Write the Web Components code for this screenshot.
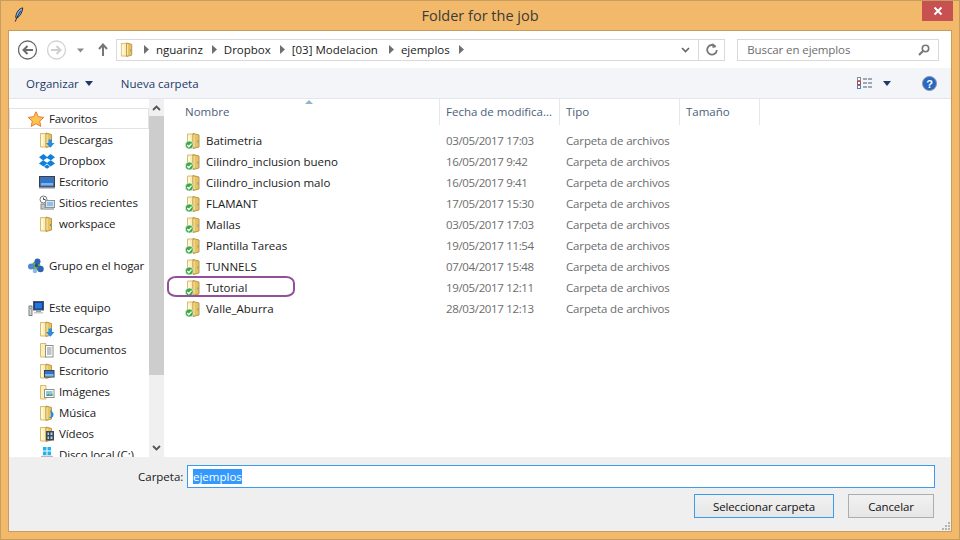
<!DOCTYPE html>
<html lang="es">
<head>
<meta charset="utf-8">
<title>Folder for the job</title>
<style>
  html, body { margin: 0; padding: 0; background: #f3b96b; }
  body { width: 960px; height: 540px; overflow: hidden; font: 11.5px "Open Sans", "Noto Sans", sans-serif; color: #1a1a1a; }
</style>
</head>
<body>
<folder-dialog></folder-dialog>

<script>
const FOLDER = `<path d="M1.500 1.500h5.500v13.500h-5.500z" fill="#fdeeb4" stroke="#d9bc73"/><path d="M7 1l5.500 1.500v11.500l-5.500 1.500z" fill="#e8c25e" stroke="#b8974e"/><path d="M8 2.500v11.500" stroke="#fbe9a8"/><path d="M3 3v10.500" stroke="#fff8dc" stroke-width="2"/>`;

const ICONS = {
  folder: `${FOLDER}<rect x="11" y="8" width="1" height="2" fill="#4a9ad8"/>`,
  down: `${FOLDER}<path d="M9.500 7.500h3.500v3.500h2.500l-4.200 4.700-4.300-4.700h2.500z" fill="#2a8be0"/>`,
  dropbox: `<path d="M4.500 1L0 4.300l4 3-4 3.100 4.500 3.100 3.500-2.900 3.500 2.900 4.500-3.100-4-3.100 4-3L11.500 1 8 4zM4.300 7.300L8 5l3.700 2.300L8 9.700z" fill="#0d7fdc" fill-rule="evenodd"/><path d="M5 13.800l3-2.300 3 2.300-3 2z" fill="#0d7fdc"/>`,
  desktop: `<rect x="0.500" y="2.500" width="15" height="10.500" fill="#4a6fa8" stroke="#3a3f4c"/><rect x="2" y="4" width="12" height="7.500" fill="#2f75c8"/><rect x="2" y="9" width="12" height="2.500" fill="#7fb4e8"/><rect x="0" y="13" width="16" height="1.500" fill="#8a8f99"/>`,
  recent: `<circle cx="4.500" cy="4.500" r="3.500" fill="#fff" stroke="#777"/><path d="M4.500 2.500v2h2" fill="none" stroke="#444"/><rect x="6.500" y="5.500" width="9" height="7" fill="#d8e4ee" stroke="#8a949e"/><rect x="8" y="7" width="6" height="4" fill="#8fc0e4"/><rect x="2" y="9" width="4" height="5" fill="#c4c8cc" stroke="#888"/><rect x="4" y="13" width="11" height="2" fill="#b9bdc2"/>`,
  homegroup: `<circle cx="8" cy="8" r="4.500" fill="#6fb04a"/><circle cx="9.500" cy="3.500" r="3" fill="#2d62b5"/><circle cx="3" cy="8.500" r="3" fill="#4f86d6"/><circle cx="12.500" cy="11" r="3.200" fill="#2d62b5"/><circle cx="7" cy="13" r="2.300" fill="#8fb8ec"/><circle cx="8.500" cy="7.500" r="1.800" fill="#1d4f9e"/>`,
  computer: `<rect x="5.500" y="1.500" width="10" height="8.500" fill="#123f9c" stroke="#555"/><rect x="7" y="3" width="7" height="5.500" fill="#1f78dc"/><rect x="8" y="10" width="5" height="2" fill="#9aa0a8"/><rect x="1" y="6" width="3" height="9.500" fill="#d7dadd" stroke="#5d6268" stroke-width="0.800"/><rect x="2" y="8" width="1" height="1" fill="#3fbf4f"/><rect x="6" y="12" width="9" height="1.500" fill="#c6cace"/>`,
  docs: `<path d="M1.500 1.500h5.500v13.500h-5.500z" fill="#fdeeb4" stroke="#d9bc73"/><rect x="6.500" y="3.500" width="7.500" height="11.500" fill="#fff" stroke="#8a8f96"/><path d="M8 6h4.500M8 8h4.500M8 10h4.500M8 12h4.500" stroke="#7c8894"/>`,
  deskfolder: `${FOLDER}<rect x="5.500" y="7.500" width="9.500" height="6.500" fill="#2f75c8" stroke="#3a3f4c"/><rect x="6" y="11" width="8.500" height="2.500" fill="#7fb4e8"/>`,
  pics: `<path d="M1.500 1.500h5.500v13.500h-5.500z" fill="#fdeeb4" stroke="#d9bc73"/><rect x="5.500" y="5.500" width="9.500" height="8" fill="#fff" stroke="#8a8f96"/><rect x="7" y="7" width="6.500" height="5" fill="#8cc6dc"/><path d="M7 12l2.500-2.500 1.500 1.500 2.500-1.500v2.500z" fill="#5c9a70"/>`,
  music: `${FOLDER}<path d="M11 4.500c1 2 3.500 2 3.500 5s-2.500 4-5 3.500c1.500-.5 2.500-1.200 2.500-3z" fill="#2a8be0"/>`,
  video: `${FOLDER}<rect x="7" y="5" width="8" height="9.500" fill="#3e4650"/><path d="M8.500 6.500h1.500v2.500h-1.500zM11.500 6.500h2v2.500h-2zM8.500 10.500h1.500v2.500h-1.500zM11.500 10.500h2v2.500h-2z" fill="#a4d0ec"/>`,
  disk: `<path d="M4 0h3.500v3.500h-3.500zM8.500 0h3.500v3.500h-3.500zM4 4.500h3.500v3.500h-3.500zM8.500 4.500h3.500v3.500h-3.500z" fill="#1fb4f0"/><path d="M1 11l2-2h10l2 2v4h-14z" fill="#c9ced3" stroke="#8d9297" stroke-width="0.600"/>`,
  star: `<path d="M8 0.800l2.300 4.900 5.400.7-4 3.700 1.100 5.300L8 12.700l-4.800 2.700 1.100-5.300-4-3.700 5.400-.7z" fill="#fbc44a" stroke="#e8793a"/>`,
  sync: `<path d="M2.500 1h5.500v13.500h-5.500z" fill="#fdeeb4" stroke="#d9bc73"/><path d="M8 .5l6 1.500v12l-6 1.500z" fill="#e8c25e" stroke="#b8974e"/><path d="M9 2v12" stroke="#fbe9a8"/><path d="M4 2.500v8" stroke="#fff8dc" stroke-width="2"/><rect x="12.500" y="7.500" width="1" height="2" fill="#4a9ad8"/><circle cx="4.300" cy="12" r="4" fill="#3aa845" stroke="#fff" stroke-width="0.600"/><path d="M2.300 12l1.600 1.700 2.600-3.100" fill="none" stroke="#fff" stroke-width="1.400"/>`
};

function icon(name, size = 16) {
  return `<svg width="${size}" height="${size}" viewBox="0 0 16 16" style="display:block;flex:none">${ICONS[name]}</svg>`;
}

class TitleBar extends HTMLElement {
  connectedCallback() {
    this.attachShadow({ mode: "open" }).innerHTML = /* html */`
      <style>
        :host { display: flex; align-items: flex-start; height: 30px; position: relative; box-sizing: border-box; border-top: 1px solid #c69c5f; }
        .feather { margin: 6px 0 0 13px; }
        .title { position: absolute; left: 0; right: 0; top: 5px; text-align: center; font-size: 14.500px; line-height: 20px; color: #3a3a3a; }
        .close { margin-left: auto; margin-right: 6px; width: 31px; height: 20px; background: #c75050; display: flex; align-items: center; justify-content: center; position: relative; }
      </style>
      <svg class="feather" width="10" height="16" viewBox="0 0 12 18">
        <path d="M10.500 0.500C6 1 2.500 6 2 12l1 1c4-2 7-7 7.500-12.500z" fill="#7db4ee" stroke="#10161f"/>
        <path d="M8 4L3 13 1.500 17" fill="none" stroke="#10161f"/>
      </svg>
      <div class="title">Folder for the job</div>
      <div class="close">
        <svg width="10" height="10" viewBox="0 0 10 10"><path d="M1.500 1.500l7 7M8.500 1.500l-7 7" stroke="#fff" stroke-width="2"/></svg>
      </div>
    `;
  }
}

class NavBar extends HTMLElement {
  connectedCallback() {
    const crumbs = ["nguarinz", "Dropbox", "[03] Modelacion", "ejemplos"];
    const arrow = `<svg class="sep" width="5" height="9" viewBox="0 0 5 9"><path d="M0 0l5 4.500L0 9z" fill="#6f6f6f"/></svg>`;
    this.attachShadow({ mode: "open" }).innerHTML = /* html */`
      <style>
        :host { display: flex; align-items: center; height: 37px; background: #fff; padding: 0 12px 0 9px; box-sizing: border-box; }
        .round { flex: none; }
        .addr { margin-left: 8px; width: 610px; height: 22px; box-sizing: border-box; border: 1px solid #d9d9d9; display: flex; align-items: center; padding-left: 3px; }
        .addr > svg:first-child { margin-right: 9px; }
        .crumb { color: #1a1a1a; margin: 0 9px 0 7px; white-space: nowrap; }
        .crumb:nth-of-type(3) { margin-right: 11px; }
        .sep { flex: none; }
        .end { margin-left: auto; height: 100%; display: flex; align-items: center; }
        .refresh { width: 25px; height: 100%; border-left: 1px solid #d9d9d9; display: flex; align-items: center; justify-content: center; margin-left: 8px; }
        .search { margin-left: 12px; width: 202px; height: 22px; box-sizing: border-box; border: 1px solid #d9d9d9; display: flex; align-items: center; justify-content: space-between; padding: 0 8px 0 9px; color: #6d6d6d; letter-spacing: -.1px; }
      </style>
      <svg class="round" width="76" height="22" viewBox="0 0 76 22">
        <circle cx="9.500" cy="11" r="9" fill="#fff" stroke="#6b6b6b" stroke-width="1.300"/>
        <path d="M15 11H5.500M9.500 7l-4 4 4 4" fill="none" stroke="#6b6b6b" stroke-width="2"/>
        <circle cx="38.500" cy="11" r="9" fill="#fff" stroke="#d2d2d2" stroke-width="1.300"/>
        <path d="M33 11h9.500M38.500 7l4 4-4 4" fill="none" stroke="#cfcfcf" stroke-width="2"/>
        <path d="M59 9.500h7l-3.500 4z" fill="#8a8a8a"/>
      </svg>
      <svg class="round" width="10" height="13" viewBox="0 0 10 13" style="margin-left:4px"><path d="M5 13V2M1 6l4-4.500L9 6" fill="none" stroke="#777" stroke-width="2"/></svg>
      <div class="addr">
        ${icon("folder", 15)}
        ${crumbs.map(c => `${arrow}<span class="crumb">${c}</span>`).join("")}${arrow}
        <div class="end">
          <svg width="9" height="6" viewBox="0 0 9 6"><path d="M1 1l3.500 3.500L8 1" fill="none" stroke="#666" stroke-width="1.600"/></svg>
          <div class="refresh">
            <svg width="12" height="13" viewBox="0 0 12 13"><path d="M9.500 3.500A4.800 4.800 0 1 0 10.800 7" fill="none" stroke="#777" stroke-width="1.800"/><path d="M6.500 0v5l4-1z" fill="#777"/></svg>
          </div>
        </div>
      </div>
      <div class="search">
        <span>Buscar en ejemplos</span>
        <svg width="12" height="12" viewBox="0 0 12 12"><circle cx="7.500" cy="4.500" r="3.200" fill="none" stroke="#777" stroke-width="1.600"/><path d="M5 7L1 11" stroke="#777" stroke-width="2.200"/></svg>
      </div>
    `;
  }
}

class ToolBar extends HTMLElement {
  connectedCallback() {
    this.attachShadow({ mode: "open" }).innerHTML = /* html */`
      <style>
        :host { display: flex; align-items: center; height: 31px; box-sizing: border-box; background: #f3f5f8; border-bottom: 1px solid #e3e6ea; padding: 0 14px 0 17px; color: #1e3a66; }
        .caret { margin: 1px 0 0 6px; }
        .new { margin-left: 28px; }
        .right { margin-left: auto; display: flex; align-items: center; }
        .help { margin-left: 31px; }
      </style>
      <span>Organizar</span>
      <svg class="caret" width="8" height="5" viewBox="0 0 8 5"><path d="M0 0h8L4 5z" fill="#1e3a66"/></svg>
      <span class="new">Nueva carpeta</span>
      <div class="right">
        <svg width="16" height="13" viewBox="0 0 16 13">
          <rect x="0.500" y="0.500" width="3" height="3" fill="#fff" stroke="#7f8ca0"/><rect x="0.500" y="4.500" width="3" height="3" fill="#fff" stroke="#c04a4a"/><rect x="0.500" y="8.500" width="3" height="3" fill="#fff" stroke="#4f7fc0"/>
          <path d="M6 2h4M11 2h4M6 6h4M11 6h4M6 10h4M11 10h4" stroke="#4a5a75"/>
        </svg>
        <svg class="caret" style="margin-left:10px" width="8" height="5" viewBox="0 0 8 5"><path d="M0 0h8L4 5z" fill="#1e3a66"/></svg>
        <svg class="help" width="15" height="15" viewBox="0 0 15 15">
          <circle cx="7.500" cy="7.500" r="7" fill="#2a66c4" stroke="#8a94a4"/>
          <text x="7.500" y="11.500" text-anchor="middle" font-size="11" font-weight="700" fill="#fff" font-family="Liberation Sans, sans-serif">?</text>
        </svg>
      </div>
    `;
  }
}

class SideRow extends HTMLElement {
  connectedCallback() {
    const indent = this.hasAttribute("child") ? 30 : 19;
    this.attachShadow({ mode: "open" }).innerHTML = /* html */`
      <style>
        :host { display: flex; align-items: center; gap: 4px; height: 21px; padding-left: ${indent}px; box-sizing: border-box; white-space: nowrap; position: relative; flex: none; letter-spacing: -.12px; }
        :host([selected]) { outline: 1px solid #e3e3e3; outline-offset: -1px; gap: 5px; }
        :host([gap]) { margin-top: 21px; gap: 5px; }
      </style>
      ${icon(this.getAttribute("icon"))}<slot></slot>
    `;
  }
}

class SideBar extends HTMLElement {
  connectedCallback() {
    this.attachShadow({ mode: "open" }).innerHTML = /* html */`
      <style>
        :host { display: flex; flex: none; width: 156px; overflow: hidden; background: #fff; }
        .items { width: 140px; padding: 9px 0 0 0; flex: none; display: flex; flex-direction: column; box-sizing: border-box; overflow: hidden; }
        .bar { width: 15px; flex: none; background: #f0f0f0; display: flex; flex-direction: column; align-items: center; }
        .up, .dn { height: 17px; flex: none; display: flex; align-items: center; justify-content: center; }
        .thumb { width: 100%; height: 259px; background: #cdcdcd; flex: none; }
        .dn { margin-top: auto; margin-bottom: 1px; }
      </style>
      <div class="items"><slot></slot></div>
      <div class="bar">
        <div class="up"><svg width="9" height="6" viewBox="0 0 9 6"><path d="M1 5l3.500-3.500L8 5" fill="none" stroke="#555" stroke-width="1.800"/></svg></div>
        <div class="thumb"></div>
        <div class="dn"><svg width="9" height="6" viewBox="0 0 9 6"><path d="M1 1l3.500 3.500L8 1" fill="none" stroke="#555" stroke-width="1.800"/></svg></div>
      </div>
    `;
  }
}

class FileList extends HTMLElement {
  connectedCallback() {
    const rows = [
      ["Batimetria", "03/05/2017 17:03"],
      ["Cilindro_inclusion bueno", "16/05/2017 9:42"],
      ["Cilindro_inclusion malo", "16/05/2017 9:41"],
      ["FLAMANT", "17/05/2017 15:30"],
      ["Mallas", "03/05/2017 17:03"],
      ["Plantilla Tareas", "19/05/2017 11:54"],
      ["TUNNELS", "07/04/2017 15:48"],
      ["Tutorial", "19/05/2017 12:11"],
      ["Valle_Aburra", "28/03/2017 12:13"],
    ];
    this.attachShadow({ mode: "open" }).innerHTML = /* html */`
      <style>
        :host { display: block; flex: 1; background: #fff; position: relative; min-width: 0; }
        .head, .row { display: grid; grid-template-columns: 275px 120px 120px 80px; }
        .head { height: 26px; color: #4c607a; position: relative; }
        .head div { padding: 4px 0 0 6px; border-right: 1px solid #e5e8ec; height: 22px; line-height: 18px; box-sizing: content-box; }
        .head div:first-child { padding-left: 20px; }
        .sort { position: absolute; left: 140px; top: 1px; }
        .rows { margin-top: 5px; }
        .row { height: 21px; align-items: center; color: #6d6d6d; }
        .name { display: flex; align-items: center; gap: 5px; padding-left: 20px; color: #1a1a1a; white-space: nowrap; }
        .cell { padding-left: 6px; white-space: nowrap; letter-spacing: -.15px; }
        .date { letter-spacing: -.35px; }
        .mark { position: absolute; left: 2px; top: 177px; width: 128px; height: 21px; box-sizing: border-box; border: 2.500px solid #954f98; border-radius: 9px / 7px; }
      </style>
      <div class="head">
        <div>Nombre</div><div>Fecha de modifica...</div><div>Tipo</div><div>Tamaño</div>
        <svg class="sort" width="8" height="4" viewBox="0 0 8 4"><path d="M0 4l4-4 4 4z" fill="#8fb4d4"/></svg>
      </div>
      <div class="rows">
        ${rows.map(r => `<div class="row"><div class="name">${icon("sync")}${r[0]}</div><div class="cell date">${r[1]}</div><div class="cell">Carpeta de archivos</div><div></div></div>`).join("")}
      </div>
      <div class="mark"></div>
    `;
  }
}

class DialogFooter extends HTMLElement {
  connectedCallback() {
    this.attachShadow({ mode: "open" }).innerHTML = /* html */`
      <style>
        :host { display: flex; flex-direction: column; flex: none; height: 74px; box-sizing: border-box; background: #efefef; padding: 8px 16px 0 129px; position: relative; }
        .line { display: flex; align-items: center; height: 23px; }
        label { width: 49px; flex: none; }
        .input { flex: 1; height: 23px; box-sizing: border-box; border: 1px solid #3c9bf0; background: #fff; display: flex; align-items: center; padding-left: 5px; }
        .sel { background: #3399ff; color: #fff; line-height: 15px; }
        .btns { display: flex; justify-content: flex-end; gap: 14px; margin-top: 6px; padding-right: 1px; }
        button { font: inherit; color: #111; height: 24px; padding: 0; box-sizing: border-box; border: 1px solid #adadad; background: linear-gradient(#f1f1f1, #e6e6e6); border-radius: 0; letter-spacing: -.15px; }
        .ok { width: 140px; border-color: #3c9bf0; }
        .no { width: 86px; }
        .grip { position: absolute; right: 1px; bottom: 1px; }
      </style>
      <div class="line"><label>Carpeta:</label><div class="input"><span class="sel">ejemplos</span></div></div>
      <div class="btns"><button class="ok">Seleccionar carpeta</button><button class="no">Cancelar</button></div>
      <svg class="grip" width="8" height="8" viewBox="0 0 8 8" fill="#b4b4b4"><rect x="6" y="0" width="2" height="2"/><rect x="3" y="3" width="2" height="2"/><rect x="6" y="3" width="2" height="2"/><rect x="0" y="6" width="2" height="2"/><rect x="3" y="6" width="2" height="2"/><rect x="6" y="6" width="2" height="2"/></svg>
    `;
  }
}

class FolderDialog extends HTMLElement {
  connectedCallback() {
    const side = [
      ["star", "Favoritos", "selected"],
      ["down", "Descargas", "child"], ["dropbox", "Dropbox", "child"], ["desktop", "Escritorio", "child"],
      ["recent", "Sitios recientes", "child"], ["folder", "workspace", "child"],
      ["homegroup", "Grupo en el hogar", "gap"],
      ["computer", "Este equipo", "gap"],
      ["down", "Descargas", "child"], ["docs", "Documentos", "child"], ["deskfolder", "Escritorio", "child"],
      ["pics", "Imágenes", "child"], ["music", "Música", "child"], ["video", "Vídeos", "child"], ["disk", "Disco local (C:)", "child"],
    ];
    this.attachShadow({ mode: "open" }).innerHTML = /* html */`
      <style>
        :host { display: flex; flex-direction: column; width: 960px; height: 540px; box-sizing: border-box; background: #f3b96b; border: 0 solid #c69c5f; border-width: 0 1px 1px 1px; }
        .client { flex: 1; margin: 0 7px 7px 7px; border: 1px solid #c69c5f; display: flex; flex-direction: column; min-height: 0; background: #fff; }
        .main { flex: 1; display: flex; min-height: 0; }
      </style>
      <title-bar></title-bar>
      <div class="client">
        <nav-bar></nav-bar>
        <tool-bar></tool-bar>
        <div class="main">
          <side-bar>
            ${side.map(s => `<side-row icon="${s[0]}" ${s[2]}>${s[1]}</side-row>`).join("")}
          </side-bar>
          <file-list></file-list>
        </div>
        <dialog-footer></dialog-footer>
      </div>
    `;
  }
}

customElements.define("side-row", SideRow);
customElements.define("side-bar", SideBar);
customElements.define("title-bar", TitleBar);
customElements.define("nav-bar", NavBar);
customElements.define("tool-bar", ToolBar);
customElements.define("file-list", FileList);
customElements.define("dialog-footer", DialogFooter);
customElements.define("folder-dialog", FolderDialog);
</script>
</body>
</html>
